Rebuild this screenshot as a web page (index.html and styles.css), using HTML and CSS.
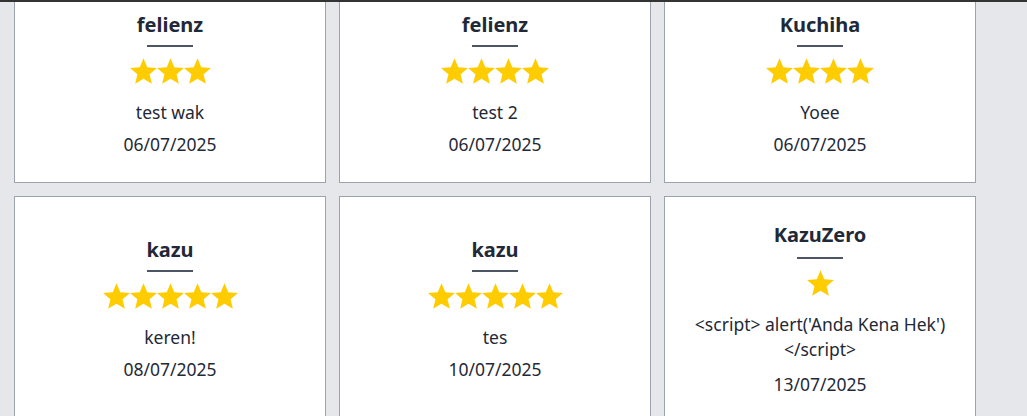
FILE: index.html
```html
<!DOCTYPE html>
<html lang="id">
<head>
<meta charset="utf-8">
<title>Ulasan</title>
<link rel="stylesheet" href="styles.css">
</head>
<body>
<div class="topbar"></div>
<main class="reviews">
  <div class="card">
    <h3 class="name">felienz</h3>
    <div class="rule"></div>
    <div class="stars">
      <svg class="star" viewBox="2.45 0 95.1 90.45"><polygon points="50,0 63.23,31.8 97.55,34.55 71.4,56.95 79.39,90.45 50,72.5 20.61,90.45 28.6,56.95 2.45,34.55 36.77,31.8"/></svg>
      <svg class="star" viewBox="2.45 0 95.1 90.45"><polygon points="50,0 63.23,31.8 97.55,34.55 71.4,56.95 79.39,90.45 50,72.5 20.61,90.45 28.6,56.95 2.45,34.55 36.77,31.8"/></svg>
      <svg class="star" viewBox="2.45 0 95.1 90.45"><polygon points="50,0 63.23,31.8 97.55,34.55 71.4,56.95 79.39,90.45 50,72.5 20.61,90.45 28.6,56.95 2.45,34.55 36.77,31.8"/></svg>
    </div>
    <p class="text">test wak</p>
    <p class="date">06/07/2025</p>
  </div>
  <div class="card">
    <h3 class="name">felienz</h3>
    <div class="rule"></div>
    <div class="stars">
      <svg class="star" viewBox="2.45 0 95.1 90.45"><polygon points="50,0 63.23,31.8 97.55,34.55 71.4,56.95 79.39,90.45 50,72.5 20.61,90.45 28.6,56.95 2.45,34.55 36.77,31.8"/></svg>
      <svg class="star" viewBox="2.45 0 95.1 90.45"><polygon points="50,0 63.23,31.8 97.55,34.55 71.4,56.95 79.39,90.45 50,72.5 20.61,90.45 28.6,56.95 2.45,34.55 36.77,31.8"/></svg>
      <svg class="star" viewBox="2.45 0 95.1 90.45"><polygon points="50,0 63.23,31.8 97.55,34.55 71.4,56.95 79.39,90.45 50,72.5 20.61,90.45 28.6,56.95 2.45,34.55 36.77,31.8"/></svg>
      <svg class="star" viewBox="2.45 0 95.1 90.45"><polygon points="50,0 63.23,31.8 97.55,34.55 71.4,56.95 79.39,90.45 50,72.5 20.61,90.45 28.6,56.95 2.45,34.55 36.77,31.8"/></svg>
    </div>
    <p class="text">test 2</p>
    <p class="date">06/07/2025</p>
  </div>
  <div class="card">
    <h3 class="name">Kuchiha</h3>
    <div class="rule"></div>
    <div class="stars">
      <svg class="star" viewBox="2.45 0 95.1 90.45"><polygon points="50,0 63.23,31.8 97.55,34.55 71.4,56.95 79.39,90.45 50,72.5 20.61,90.45 28.6,56.95 2.45,34.55 36.77,31.8"/></svg>
      <svg class="star" viewBox="2.45 0 95.1 90.45"><polygon points="50,0 63.23,31.8 97.55,34.55 71.4,56.95 79.39,90.45 50,72.5 20.61,90.45 28.6,56.95 2.45,34.55 36.77,31.8"/></svg>
      <svg class="star" viewBox="2.45 0 95.1 90.45"><polygon points="50,0 63.23,31.8 97.55,34.55 71.4,56.95 79.39,90.45 50,72.5 20.61,90.45 28.6,56.95 2.45,34.55 36.77,31.8"/></svg>
      <svg class="star" viewBox="2.45 0 95.1 90.45"><polygon points="50,0 63.23,31.8 97.55,34.55 71.4,56.95 79.39,90.45 50,72.5 20.61,90.45 28.6,56.95 2.45,34.55 36.77,31.8"/></svg>
    </div>
    <p class="text">Yoee</p>
    <p class="date">06/07/2025</p>
  </div>
  <div class="card">
    <h3 class="name">kazu</h3>
    <div class="rule"></div>
    <div class="stars">
      <svg class="star" viewBox="2.45 0 95.1 90.45"><polygon points="50,0 63.23,31.8 97.55,34.55 71.4,56.95 79.39,90.45 50,72.5 20.61,90.45 28.6,56.95 2.45,34.55 36.77,31.8"/></svg>
      <svg class="star" viewBox="2.45 0 95.1 90.45"><polygon points="50,0 63.23,31.8 97.55,34.55 71.4,56.95 79.39,90.45 50,72.5 20.61,90.45 28.6,56.95 2.45,34.55 36.77,31.8"/></svg>
      <svg class="star" viewBox="2.45 0 95.1 90.45"><polygon points="50,0 63.23,31.8 97.55,34.55 71.4,56.95 79.39,90.45 50,72.5 20.61,90.45 28.6,56.95 2.45,34.55 36.77,31.8"/></svg>
      <svg class="star" viewBox="2.45 0 95.1 90.45"><polygon points="50,0 63.23,31.8 97.55,34.55 71.4,56.95 79.39,90.45 50,72.5 20.61,90.45 28.6,56.95 2.45,34.55 36.77,31.8"/></svg>
      <svg class="star" viewBox="2.45 0 95.1 90.45"><polygon points="50,0 63.23,31.8 97.55,34.55 71.4,56.95 79.39,90.45 50,72.5 20.61,90.45 28.6,56.95 2.45,34.55 36.77,31.8"/></svg>
    </div>
    <p class="text">keren!</p>
    <p class="date">08/07/2025</p>
  </div>
  <div class="card">
    <h3 class="name">kazu</h3>
    <div class="rule"></div>
    <div class="stars">
      <svg class="star" viewBox="2.45 0 95.1 90.45"><polygon points="50,0 63.23,31.8 97.55,34.55 71.4,56.95 79.39,90.45 50,72.5 20.61,90.45 28.6,56.95 2.45,34.55 36.77,31.8"/></svg>
      <svg class="star" viewBox="2.45 0 95.1 90.45"><polygon points="50,0 63.23,31.8 97.55,34.55 71.4,56.95 79.39,90.45 50,72.5 20.61,90.45 28.6,56.95 2.45,34.55 36.77,31.8"/></svg>
      <svg class="star" viewBox="2.45 0 95.1 90.45"><polygon points="50,0 63.23,31.8 97.55,34.55 71.4,56.95 79.39,90.45 50,72.5 20.61,90.45 28.6,56.95 2.45,34.55 36.77,31.8"/></svg>
      <svg class="star" viewBox="2.45 0 95.1 90.45"><polygon points="50,0 63.23,31.8 97.55,34.55 71.4,56.95 79.39,90.45 50,72.5 20.61,90.45 28.6,56.95 2.45,34.55 36.77,31.8"/></svg>
      <svg class="star" viewBox="2.45 0 95.1 90.45"><polygon points="50,0 63.23,31.8 97.55,34.55 71.4,56.95 79.39,90.45 50,72.5 20.61,90.45 28.6,56.95 2.45,34.55 36.77,31.8"/></svg>
    </div>
    <p class="text">tes</p>
    <p class="date">10/07/2025</p>
  </div>
  <div class="card card-long">
    <h3 class="name">KazuZero</h3>
    <div class="rule"></div>
    <div class="stars">
      <svg class="star" viewBox="2.45 0 95.1 90.45"><polygon points="50,0 63.23,31.8 97.55,34.55 71.4,56.95 79.39,90.45 50,72.5 20.61,90.45 28.6,56.95 2.45,34.55 36.77,31.8"/></svg>
    </div>
    <p class="text">&lt;script&gt; alert('Anda Kena Hek') &lt;/script&gt;</p>
    <p class="date">13/07/2025</p>
  </div>
</main>
</body>
</html>
```

FILE: styles.css
```css
html, body {
  margin: 0;
  padding: 0;
}

body {
  background: #e5e7eb;
  font-family: "Noto Sans", "Open Sans", sans-serif;
  color: #1f2937;
  overflow: hidden;
}

.topbar {
  position: fixed;
  top: 0;
  left: 0;
  right: 0;
  height: 2px;
  background: #333333;
  z-index: 10;
}

.reviews {
  display: grid;
  grid-template-columns: repeat(3, 312px);
  gap: 13px;
  padding-left: 14px;
  margin-top: -14px;
}

.card {
  background: #ffffff;
  border: 1px solid #9ca3af;
  padding: 24px;
  display: flex;
  flex-direction: column;
  align-items: center;
  justify-content: center;
  text-align: center;
}

.name {
  margin: 0 0 6px;
  font-size: 20px;
  line-height: 28px;
  font-weight: 700;
  color: #1f2937;
}

.rule {
  width: 46px;
  height: 2px;
  background: #4b5563;
  margin-bottom: 10px;
}

.stars {
  display: flex;
  height: 27px;
  align-items: center;
}

.star {
  width: 27px;
  height: 26px;
  fill: #ffcc00;
  display: block;
}

.text {
  margin: 16px 0 0;
  font-size: 17.5px;
  line-height: 25px;
  color: #1f2937;
}

.date {
  margin: 6px 0 0;
  font-size: 17.5px;
  line-height: 27px;
  color: #1f2937;
}

.card-long .name {
  margin-bottom: 8px;
}

.card-long .text {
  margin-bottom: 3px;
}
```
